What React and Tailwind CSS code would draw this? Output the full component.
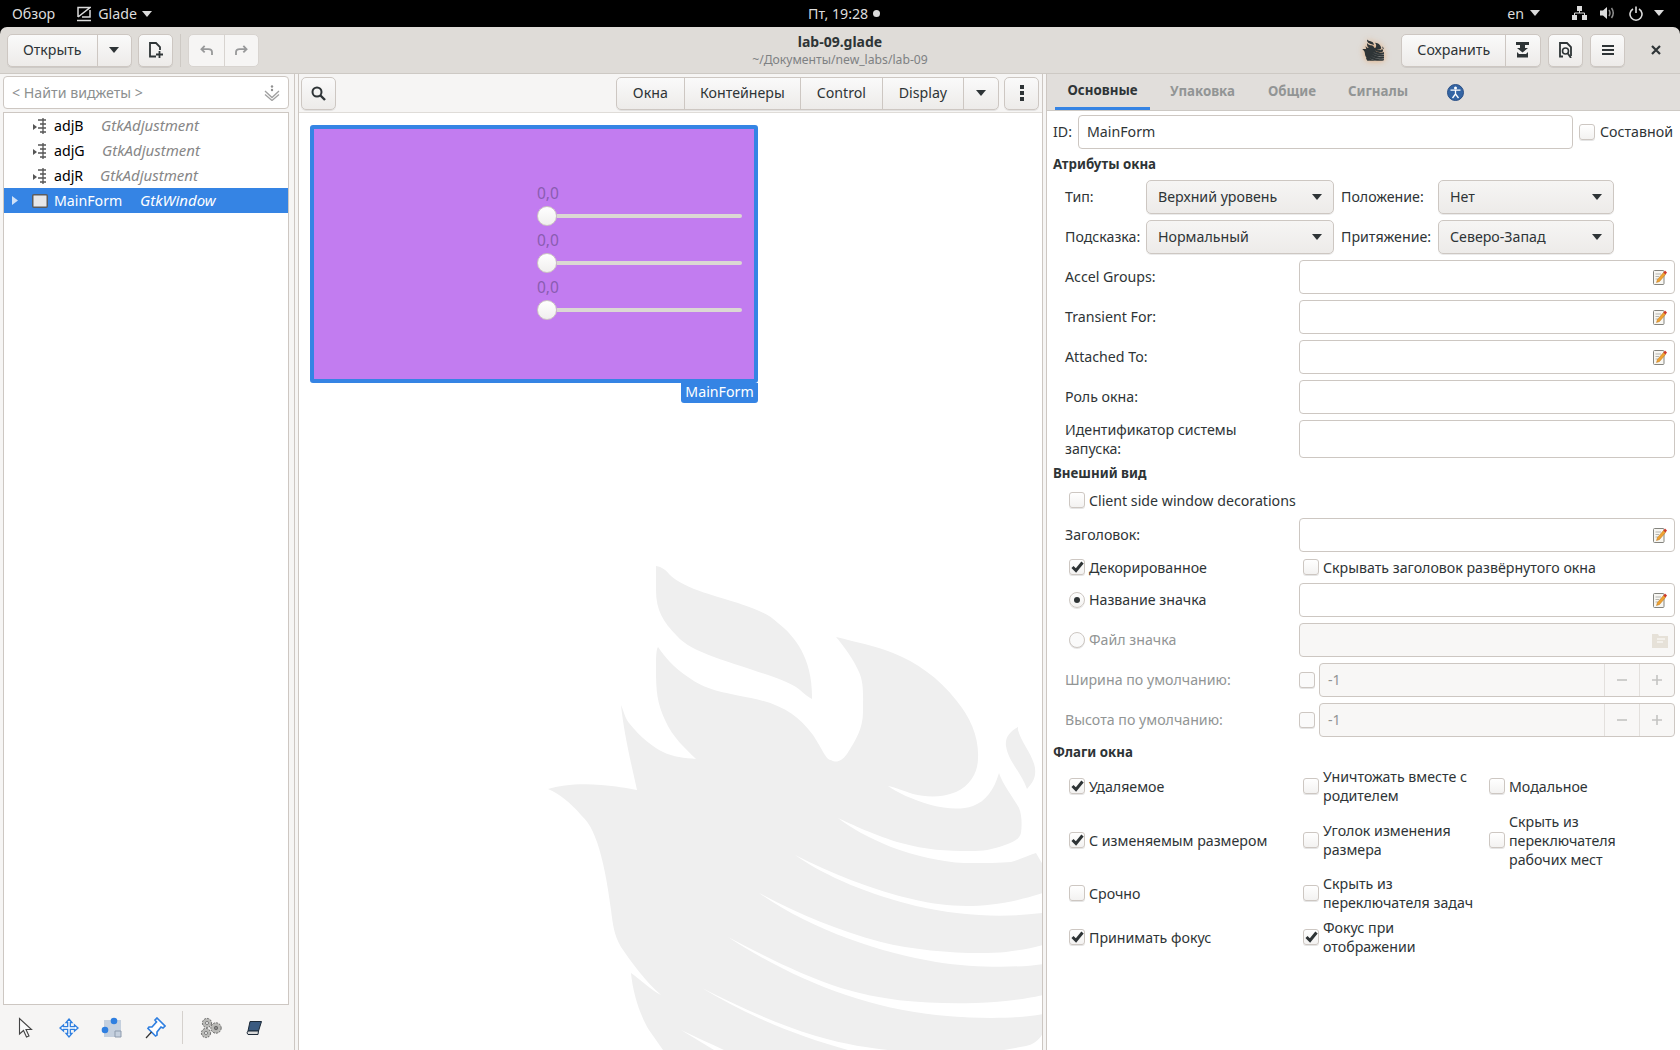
import React from 'react';

const btnCls = 'flex items-center justify-center h-[33px] border border-[#cdc7c2] rounded-[5px] bg-gradient-to-b from-[#fafafa] to-[#edebe9] shadow-[0_1px_0_rgba(0,0,0,0.08)]';

function FlameShape({ fill, cut }) {
  return (
    <>
      <path
        fill={fill}
        d="M655 566 C661 567 665 570 668 574 C680 586 700 592 737 603 C757 610 768 614 777 623 C795 637 812 660 811 699 C805 696 802 692 795 687 C780 678 750 670 713 657 C695 650 684 645 676 636 C662 622 655 610 655 590 Z"
      />
      <path
        fill={fill}
        d="M1017 727 C1008 732 1004 738 1005 746 C1007 761 1020 772 1026 789 C1032 782 1035 778 1034 768 C1032 755 1020 742 1017 730 Z"
      />
      <path
        fill={fill}
        d="M547 789 C560 785 580 783 600 785 C615 786 625 788 636 790 L632 772 C627 750 622 725 620 705 C623 712 624 718 628 723 C640 738 652 747 662 752 C672 757 684 758 695 759 C684 748 672 738 664 720 C656 703 655 690 655 670 C655 658 655 650 657 647 C664 657 672 667 687 677 C705 690 720 692 750 698 C780 704 797 715 812 735 C822 750 825 760 830 760 C835 763 840 762 846 754 C855 740 862 728 862 712 C862 695 863 683 858 672 C853 660 842 645 835 637 C855 642 875 646 892 653 C915 662 938 678 955 700 C970 718 978 738 977 758 C977 772 970 785 955 792 C940 798 925 797 912 794 C900 790 890 786 887 786 C895 792 912 800 930 805 C945 809 960 810 972 806 C985 801 993 790 998 773 C1002 785 1012 797 1018 808 C1021 815 1021 825 1020 833 C1018 840 1012 842 1004 845 C990 850 982 851 970 851 C945 851 925 850 900 843 C875 836 850 824 837 818 C850 828 868 838 890 847 C915 856 940 862 963 863 C985 863 1000 863 1010 862 C1018 860 1028 855 1035 853 L1042 865 L1042 1033 C1038 1040 1033 1044 1025 1046 L1003 1050 L662 1050 L648 1030 C640 1017 632 995 630 973 C640 980 650 990 660 995 C645 982 630 962 620 947 C613 935 612 925 610 910 C606 880 602 860 596 842 C590 825 585 820 580 815 C570 803 557 793 547 789 Z"
      />
      <path fill={cut} d="M794 855 C830 873 870 890 915 900 C950 908 990 910 1042 893 L1042 913 C1000 918 960 916 915 906 C870 895 825 877 794 855 Z" />
      <path fill={cut} d="M758 893 C800 915 835 930 880 942 C920 952 975 955 1005 952 C1020 950 1032 948 1042 945 L1042 964 C1015 968 975 968 935 962 C880 953 810 930 758 893 Z" />
      <path fill={cut} d="M727 937 C765 957 800 975 840 988 C885 1002 930 1004 975 1003 C1000 1002 1020 1000 1042 995 L1042 1014 C1015 1019 975 1019 935 1015 C860 1007 790 978 727 937 Z" />
      <path fill={cut} d="M701 988 C735 1005 770 1022 815 1036 C845 1045 870 1048 887 1050 L847 1050 C800 1037 750 1018 701 988 Z" />
      <path fill={cut} d="M680 1030 C695 1037 710 1044 723 1050 L713 1050 Z" />
    </>
  );
}

function Caret({ className = 'text-[#2e3436]' }) {
  return (
    <svg width="10" height="6" viewBox="0 0 10 6" className={className}>
      <path d="M0 0 H10 L5 6 Z" fill="currentColor" />
    </svg>
  );
}

function Check({ checked, disabled }) {
  return (
    <span className={`w-4 h-4 shrink-0 flex items-center justify-center rounded-[3px] border border-[#cdc7c2] shadow-[0_1px_0_rgba(0,0,0,0.1)] ${disabled ? 'bg-[#fafafa]' : 'bg-gradient-to-b from-white to-[#f3f2f1]'}`}>
      {checked && (
        <svg width="13" height="12" viewBox="0 0 13 12">
          <path d="M1.5 6 L5 9.5 L11.5 1.5" fill="none" stroke="#2e3436" strokeWidth="3" />
        </svg>
      )}
    </span>
  );
}

function Radio({ checked, disabled }) {
  return (
    <span className={`w-4 h-4 shrink-0 flex items-center justify-center rounded-full border border-[#cdc7c2] shadow-[0_1px_0_rgba(0,0,0,0.1)] ${disabled ? 'bg-[#fafafa]' : 'bg-gradient-to-b from-white to-[#f3f2f1]'}`}>
      {checked && <span className="w-[6px] h-[6px] rounded-full bg-[#2e3436]" />}
    </span>
  );
}

function Combo({ label, width }) {
  return (
    <div className={`${width} h-[34px] shrink-0 flex items-center justify-between pl-[11px] pr-[11px] border border-[#cdc7c2] rounded-[5px] bg-gradient-to-b from-[#f6f5f4] to-[#edebe9] shadow-[0_1px_0_rgba(0,0,0,0.08)]`}>
      <span>{label}</span>
      <Caret />
    </div>
  );
}

function Pencil() {
  return (
    <svg width="14" height="16" viewBox="0 0 14 16">
      <rect x="0.5" y="1.5" width="10.5" height="14" rx="1" fill="#f7f6f2" stroke="#84847f" />
      <path d="M2.5 5 H8 M2.5 7.5 H6 M2.5 10 H5" stroke="#b5b5b0" />
      <path d="M3.5 13.5 L4.5 10.5 L10.5 3.5 L12.5 5.5 L6.5 12.5 Z" fill="#eea232" stroke="#b8741a" strokeWidth="0.5" />
      <path d="M10.5 3.5 L12 1.5 L14 3.5 L12.5 5.5 Z" fill="#cf3a2b" />
    </svg>
  );
}

function PropEntry({ icon, disabled }) {
  return (
    <div className={`flex-1 h-[34px] border border-[#cdc7c2] rounded-[4px] flex items-center justify-end pr-[7px] ${disabled ? 'bg-[#f8f7f6]' : 'bg-white'}`}>
      {icon === 'pencil' && <Pencil />}
      {icon === 'folder' && (
        <svg width="16" height="15" viewBox="0 0 16 15" className="mr-[-1px]">
          <path d="M0 1 H6 L7 3 H16 V15 H0 Z" fill="#e6e1d8" />
          <path d="M5 6 H13 M5 9 H11" stroke="#f7f5f1" strokeWidth="1.4" />
        </svg>
      )}
    </div>
  );
}

function LabelRow({ label, icon }) {
  return (
    <div className="mt-[6px] h-[34px] flex items-center">
      <span className="w-[246px] pl-[12px] shrink-0">{label}</span>
      <PropEntry icon={icon} />
    </div>
  );
}

function SpinRow({ label }) {
  return (
    <div className="mt-[6px] h-[34px] flex items-center text-[#929595]">
      <span className="w-[246px] pl-[12px] shrink-0">{label}</span>
      <Check disabled />
      <div className="ml-[4px] flex-1 h-[34px] flex items-center border border-[#cdc7c2] rounded-[4px] bg-[#f8f7f6]">
        <span className="flex-1 pl-[8px]">-1</span>
        <span className="w-[35px] h-full flex items-center justify-center border-l border-[#e3e0dd]">
          <svg width="10" height="10" viewBox="0 0 10 10"><path d="M0 5 H10" stroke="#c4c4c2" strokeWidth="1.6" /></svg>
        </span>
        <span className="w-[35px] h-full flex items-center justify-center border-l border-[#e3e0dd]">
          <svg width="10" height="10" viewBox="0 0 10 10"><path d="M0 5 H10 M5 0 V10" stroke="#c4c4c2" strokeWidth="1.6" /></svg>
        </span>
      </div>
    </div>
  );
}

function Flag({ checked, children }) {
  return (
    <div className="flex items-center gap-[4px] leading-[19px]">
      <Check checked={checked} />
      <span>{children}</span>
    </div>
  );
}

function TreeRow({ name, type, typeClass }) {
  return (
    <div className="h-[25px] flex items-center relative pl-[29px]">
      <svg width="4" height="6" viewBox="0 0 4 6" className="mr-[1px] mt-[2px]"><path d="M0 0 L4 3 L0 6 Z" fill="#555" /></svg>
      <svg width="9" height="16" viewBox="0 0 9 16" className="mr-[7px] shrink-0">
        <path d="M5 0 V16 M0 2 H8 M2 6 H8 M0 10 H8 M2 14 H8" stroke="#555" strokeWidth="1.3" fill="none" />
      </svg>
      <span className="text-black">{name}</span>
      <span className={`${typeClass} italic text-[15px] text-[#878787] absolute`}>{type}</span>
    </div>
  );
}

function Slider() {
  return (
    <div className="h-[47px] flex flex-col">
      <span className="h-[19px] leading-[19px] text-[15.5px] text-[#8a5cb0] mt-[1px]">0,0</span>
      <div className="flex items-center mt-[3px]">
        <span className="w-[20px] h-[20px] rounded-full bg-gradient-to-b from-white to-[#f0efee] border border-[#cdc7c2] shrink-0 z-10" />
        <span className="w-[185px] h-[4px] bg-[#dbd8d3] rounded-r-[2px]" />
      </div>
    </div>
  );
}

function ToolIcon({ children }) {
  return <span className="w-[43px] h-full flex items-center justify-center">{children}</span>;
}

export default function App() {
  return (
    <div className="w-[1680px] h-[1050px] flex flex-col overflow-hidden bg-black font-['Noto_Sans',sans-serif] text-[14.2px] text-[#2e3436]">
      {/* Top bar */}
      <div className="h-[27px] shrink-0 relative flex items-center text-[#dcdcdc] pl-[12px] pr-[16px]">
        <span>Обзор</span>
        <svg width="14" height="16" viewBox="0 0 14 16" className="ml-[22px]">
          <path d="M1 11 V1.5 H13 L1 11 M13 4 V11 H5 M0 14.5 H14" fill="none" stroke="#dcdcdc" strokeWidth="1.5" />
        </svg>
        <span className="ml-[7px]">Glade</span>
        <span className="ml-[5px]"><Caret className="text-[#dcdcdc]" /></span>
        <div className="absolute left-[808px] top-0 h-full flex items-center gap-[5px]">
          <span>Пт, 19:28</span>
          <span className="w-[7px] h-[7px] rounded-full bg-[#dcdcdc]" />
        </div>
        <div className="ml-auto flex items-center">
          <span>en</span>
          <span className="ml-[6px]"><Caret className="text-[#dcdcdc]" /></span>
          <svg width="15" height="14" viewBox="0 0 15 14" className="ml-[32px]">
            <path d="M5 0 H10 V5 H5 Z M0 9 H5 V14 H0 Z M10 9 H15 V14 H10 Z" fill="#dcdcdc" />
            <path d="M7.5 5 V7 M2.5 9 V7 H12.5 V9" stroke="#dcdcdc" fill="none" />
          </svg>
          <svg width="15" height="14" viewBox="0 0 15 14" className="ml-[13px]">
            <path d="M0 4.5 H3 L7 1 V13 L3 9.5 H0 Z" fill="#dcdcdc" />
            <path d="M9 4 Q11 7 9 10 M11.5 2 Q15 7 11.5 12" stroke="#8e8e8e" strokeWidth="1.5" fill="none" />
          </svg>
          <svg width="14" height="15" viewBox="0 0 14 15" className="ml-[14px]">
            <path d="M4 3 A6 6 0 1 0 10 3 M7 0.5 V7" stroke="#dcdcdc" strokeWidth="1.6" fill="none" />
          </svg>
          <span className="ml-[11px]"><Caret className="text-[#dcdcdc]" /></span>
        </div>
      </div>

      {/* Header bar */}
      <div className="h-[47px] shrink-0 relative flex items-center pl-[7px] pr-[19px] rounded-t-[7px] bg-[#dfdcd8] border-b border-[#cdc9c4]">
        <div className={`${btnCls} w-[125px]`}>
          <span className="w-[90px] text-center">Открыть</span>
          <span className="w-[35px] h-full flex items-center justify-center border-l border-[#cdc7c2]"><Caret /></span>
        </div>
        <div className={`${btnCls} w-[35px] ml-[6px]`}>
          <svg width="14" height="16" viewBox="0 0 14 16">
            <path d="M7 14.5 H1 V1 H7 L11 5 V8" fill="none" stroke="#2e3436" strokeWidth="1.8" />
            <path d="M7 12.5 H14 M10.5 9 V16" stroke="#2e3436" strokeWidth="1.8" />
          </svg>
        </div>
        <span className="w-px h-[33px] bg-[#cdc9c4] ml-[7px]" />
        <div className="ml-[7px] flex h-[33px] w-[71px] border border-[#d8d4d0] rounded-[5px] bg-[#f6f5f4]">
          <span className="w-[35px] flex items-center justify-center">
            <svg width="13" height="11" viewBox="0 0 14 12"><path d="M5 1 L1.5 4.5 L5 8 M2 4.5 H9 Q13 4.5 13 8 V11" fill="none" stroke="#98999a" strokeWidth="2" /></svg>
          </span>
          <span className="flex-1 flex items-center justify-center border-l border-[#d8d4d0]">
            <svg width="13" height="11" viewBox="0 0 14 12"><path d="M9 1 L12.5 4.5 L9 8 M12 4.5 H5 Q1 4.5 1 8 V11" fill="none" stroke="#98999a" strokeWidth="2" /></svg>
          </span>
        </div>

        <div className="absolute left-0 right-0 top-0 h-full flex flex-col items-center pointer-events-none">
          <span className="font-bold text-[14px] leading-[18px] mt-[6px]">lab-09.glade</span>
          <span className="text-[12.2px] leading-[16px] mt-[1px] text-[#7e8183]">~/Документы/new_labs/lab-09</span>
        </div>

        <div className="ml-auto flex items-center z-10">
          <svg width="22" height="24" viewBox="540 560 502 490" className="mr-[17px] drop-shadow-[0_0_3px_rgba(230,150,80,0.7)]">
            <FlameShape fill="#2e3436" cut="#8f8f8c" />
          </svg>
          <div className={`${btnCls} w-[140px]`}>
            <span className="w-[105px] text-center">Сохранить</span>
            <span className="w-[35px] h-full flex items-center justify-center border-l border-[#cdc7c2]">
              <svg width="14" height="16" viewBox="0 0 14 16">
                <path d="M0 0 H13 V3 H0 Z M4 3 H9 V6 H12 L6.5 10.5 L1 6 H4 Z M1 10 L3 12 H10 L12 10 V15.5 H1 Z" fill="#2e3436" />
              </svg>
            </span>
          </div>
          <div className={`${btnCls} w-[35px] ml-[7px]`}>
            <svg width="14" height="16" viewBox="0 0 14 16">
              <path d="M4 14.5 H1 V1 H8 L12 5 V14" fill="none" stroke="#2e3436" strokeWidth="1.8" />
              <circle cx="6.5" cy="9" r="3" fill="none" stroke="#2e3436" strokeWidth="1.6" />
              <path d="M8.5 11 L12 16" stroke="#2e3436" strokeWidth="1.8" />
            </svg>
          </div>
          <div className={`${btnCls} w-[35px] ml-[7px]`}>
            <svg width="12" height="10" viewBox="0 0 12 10"><path d="M0 1 H12 M0 5 H12 M0 9 H12" stroke="#2e3436" strokeWidth="1.8" /></svg>
          </div>
          <svg width="10" height="10" viewBox="0 0 10 10" className="ml-[26px]"><path d="M1 1 L9 9 M9 1 L1 9" stroke="#2e3436" strokeWidth="2.2" /></svg>
        </div>
      </div>

      {/* Main area */}
      <div className="flex-1 min-h-0 flex bg-[#f6f5f4]">
        {/* Left panel */}
        <div className="w-[295px] shrink-0 flex flex-col pl-[3px] pr-[5px] pt-[2px] border-r border-[#cdc7c2]">
          <div className="h-[33px] shrink-0 border border-[#cdc7c2] rounded-[4px] bg-white flex items-center justify-between pl-[8px] pr-[8px] text-[#8c8f90]">
            <span>&lt; Найти виджеты &gt;</span>
            <svg width="16" height="16" viewBox="0 0 16 16">
              <circle cx="8" cy="1.5" r="1.2" fill="#909090" />
              <circle cx="8" cy="5" r="1.2" fill="#909090" />
              <path d="M1 6 L8 12.5 L15 6 M1 9.5 L8 15.5 L15 9.5" fill="none" stroke="#a0a0a0" strokeWidth="1.3" />
            </svg>
          </div>
          <div className="flex-1 mt-[3px] border border-[#cdc7c2] bg-white">
            <TreeRow name="adjB" type="GtkAdjustment" typeClass="left-[97px]" />
            <TreeRow name="adjG" type="GtkAdjustment" typeClass="left-[98px]" />
            <TreeRow name="adjR" type="GtkAdjustment" typeClass="left-[96px]" />
            <div className="h-[25px] flex items-center relative bg-[#3584e4] text-white pl-[8px]">
              <svg width="6" height="9" viewBox="0 0 6 9"><path d="M0 0 L6 4.5 L0 9 Z" fill="#cfe1f7" /></svg>
              <svg width="16" height="14" viewBox="0 0 16 14" className="ml-[14px]">
                <rect x="0.75" y="0.75" width="14.5" height="12.5" rx="1" fill="#e8e8e8" stroke="#5c5c5c" strokeWidth="1.5" />
              </svg>
              <span className="ml-[6px]">MainForm</span>
              <span className="italic text-[15px] absolute left-[136px]">GtkWindow</span>
            </div>
          </div>
          <div className="h-[45px] shrink-0 flex items-center pl-[1px]">
            <ToolIcon>
              <svg width="16" height="22" viewBox="0 0 16 22"><path d="M1.5 1.5 V17 L5.5 13.5 L8.5 20 L11 19 L8 12.5 L13.5 12.5 Z" fill="#fafafa" stroke="#444" strokeWidth="1.1" /></svg>
            </ToolIcon>
            <ToolIcon>
              <svg width="20" height="20" viewBox="0 0 20 20"><path d="M10 1 L13 4.5 H11.3 V8.7 H15.5 V7 L19 10 L15.5 13 V11.3 H11.3 V15.5 H13 L10 19 L7 15.5 H8.7 V11.3 H4.5 V13 L1 10 L4.5 7 V8.7 H8.7 V4.5 H7 Z" fill="#fff" stroke="#2f7fe0" strokeWidth="1.3" /></svg>
            </ToolIcon>
            <ToolIcon>
              <svg width="21" height="21" viewBox="0 0 21 21">
                <path d="M3 3 H20 V20 H3 Z" fill="#c5d0de" />
                <path d="M14 14 H20 V20 H14 Z" fill="none" stroke="#8d9bad" />
                <circle cx="13" cy="4" r="3.3" fill="#2f7fe0" />
                <circle cx="4" cy="13" r="3.3" fill="#2f7fe0" />
              </svg>
            </ToolIcon>
            <ToolIcon>
              <svg width="22" height="22" viewBox="0 0 22 22">
                <path d="M13 1 L21 9 L19 11 L17 10 L13 15 L13 18 L11.5 19 L4 11.5 L5 10 L8 10 L12.5 5 L11 3 Z" fill="#fff" stroke="#2f7fe0" strokeWidth="1.7" />
                <path d="M7.5 15 L2 21" stroke="#333" strokeWidth="1.2" />
              </svg>
            </ToolIcon>
            <span className="w-px h-[33px] bg-[#d5d1cd] mx-[6px]" />
            <ToolIcon>
              <svg width="22" height="22" viewBox="0 0 22 22">
                <g fill="#b9b9b6" stroke="#555" strokeWidth="0.8">
                  <circle cx="7" cy="6" r="4.6" strokeDasharray="2 1" />
                  <circle cx="16" cy="11" r="5.2" strokeDasharray="2 1" />
                  <circle cx="6" cy="16" r="4.6" strokeDasharray="2 1" />
                </g>
                <circle cx="7" cy="6" r="1.5" fill="#fff" stroke="#555" strokeWidth="0.7" />
                <circle cx="16" cy="11" r="1.7" fill="#888" stroke="#555" strokeWidth="0.7" />
                <circle cx="6" cy="16" r="1.5" fill="#fff" stroke="#555" strokeWidth="0.7" />
              </svg>
            </ToolIcon>
            <ToolIcon>
              <svg width="16" height="14" viewBox="0 0 16 14">
                <path d="M4 0.5 H15.5 L12.5 10 H2 Z" fill="#3a5a80" stroke="#1d2a38" />
                <path d="M2 10 Q0 12 2 13.5 H12 L12.5 10 Z" fill="#d9d9d9" stroke="#1d2a38" />
              </svg>
            </ToolIcon>
          </div>
        </div>

        {/* Center */}
        <div className="w-[3px] shrink-0" />
        <div className="w-[745px] shrink-0 flex flex-col border-l border-r border-[#cdc7c2] relative">
          <div className="h-[39px] shrink-0 flex items-center pl-[2px] pr-[3px] border-b border-[#dfdcd8]">
            <div className={`${btnCls} w-[35px]`}>
              <svg width="15" height="15" viewBox="0 0 15 15">
                <circle cx="6" cy="6" r="4.5" fill="none" stroke="#2e3436" strokeWidth="2" />
                <path d="M9.5 9.5 L14 14" stroke="#2e3436" strokeWidth="2.4" />
              </svg>
            </div>
            <div className={`${btnCls} ml-auto w-[383px]`}>
              <span className="w-[67px] text-center">Окна</span>
              <span className="w-[117px] h-full flex items-center justify-center border-l border-[#cdc7c2]">Контейнеры</span>
              <span className="w-[82px] h-full flex items-center justify-center border-l border-[#cdc7c2]">Control</span>
              <span className="w-[82px] h-full flex items-center justify-center border-l border-[#cdc7c2]">Display</span>
              <span className="w-[35px] h-full flex items-center justify-center border-l border-[#cdc7c2]"><Caret /></span>
            </div>
            <div className={`${btnCls} w-[35px] ml-[5px]`}>
              <svg width="4" height="16" viewBox="0 0 4 16"><path d="M0 0 H4 V4 H0 Z M0 6 H4 V10 H0 Z M0 12 H4 V16 H0 Z" fill="#2e3436" /></svg>
            </div>
          </div>
          <div className="flex-1 bg-white relative overflow-hidden">
            <svg width="744" height="937" viewBox="298 113 744 937" className="absolute left-0 top-0">
              <FlameShape fill="#efefef" cut="#ffffff" />
            </svg>
            <div className="relative ml-[11px] mt-[12px] w-[448px] flex flex-col items-end">
              <div className="w-full h-[258px] border-4 border-[#3584e4] rounded-[3px] bg-[#c27cf0] pl-[223px] pt-[54px]">
                <Slider />
                <Slider />
                <Slider />
              </div>
              <span className="h-[20px] w-[77px] bg-[#3584e4] text-white rounded-b-[3px] text-center leading-[18px]">MainForm</span>
            </div>
          </div>
        </div>
        <div className="w-[3px] shrink-0" />

        {/* Right panel */}
        <div className="flex-1 min-w-0 flex flex-col border-l border-[#cdc7c2] bg-white">
          <div className="h-[37px] shrink-0 flex bg-[#e1dedb] border-b border-[#cdc9c4] font-bold text-[13.3px] text-[#929595] pl-[8px]">
            <span className="h-full w-[95px] flex items-center justify-center text-[#2e3436] border-b-[3px] border-[#3584e4]">Основные</span>
            <span className="h-full flex items-center ml-[20px]">Упаковка</span>
            <span className="h-full flex items-center ml-[33px]">Общие</span>
            <span className="h-full flex items-center ml-[32px]">Сигналы</span>
            <span className="h-full flex items-center ml-[39px]">
              <svg width="17" height="17" viewBox="0 0 17 17">
                <circle cx="8.5" cy="8.5" r="8" fill="#3465a4" stroke="#2a4f85" />
                <circle cx="8.5" cy="4" r="1.5" fill="#fff" />
                <path d="M3.5 6.2 H13.5 M8.5 6.2 V10 M8.5 10 L5.5 14 M8.5 10 L11.5 14" stroke="#fff" strokeWidth="1.3" fill="none" />
              </svg>
            </span>
          </div>
          <div className="flex-1 flex flex-col pl-[6px] pr-[5px]">
            <div className="mt-[4px] h-[34px] flex items-center">
              <span className="w-[25px] shrink-0">ID:</span>
              <div className="w-[495px] h-[34px] shrink-0 border border-[#cdc7c2] rounded-[4px] bg-white flex items-center pl-[8px]">MainForm</div>
              <span className="ml-[6px] mr-[5px]"><Check /></span>
              <span>Составной</span>
            </div>
            <div className="mt-[5px] h-[20px] font-bold text-[13.3px] leading-[20px]">Атрибуты окна</div>
            <div className="mt-[6px] h-[34px] flex items-center">
              <span className="w-[93px] pl-[12px] shrink-0">Тип:</span>
              <Combo label="Верхний уровень" width="w-[188px]" />
              <span className="w-[104px] pl-[7px] shrink-0">Положение:</span>
              <Combo label="Нет" width="w-[176px]" />
            </div>
            <div className="mt-[6px] h-[34px] flex items-center">
              <span className="w-[93px] pl-[12px] shrink-0">Подсказка:</span>
              <Combo label="Нормальный" width="w-[188px]" />
              <span className="w-[104px] pl-[7px] shrink-0">Притяжение:</span>
              <Combo label="Северо-Запад" width="w-[176px]" />
            </div>
            <LabelRow label="Accel Groups:" icon="pencil" />
            <LabelRow label="Transient For:" icon="pencil" />
            <LabelRow label="Attached To:" icon="pencil" />
            <LabelRow label="Роль окна:" />
            <div className="mt-[6px] h-[38px] flex items-center">
              <span className="w-[246px] pl-[12px] pr-[30px] shrink-0 leading-[19px]">Идентификатор системы запуска:</span>
              <div className="flex-1 h-[38px] border border-[#cdc7c2] rounded-[4px] bg-white" />
            </div>
            <div className="mt-[5px] h-[20px] font-bold text-[13.3px] leading-[20px]">Внешний вид</div>
            <div className="mt-[7px] h-[20px] flex items-center pl-[16px]">
              <Flag>Client side window decorations</Flag>
            </div>
            <div className="mt-[8px] h-[34px] flex items-center">
              <span className="w-[246px] pl-[12px] shrink-0">Заголовок:</span>
              <PropEntry icon="pencil" />
            </div>
            <div className="mt-[5px] h-[20px] flex items-center pl-[16px]">
              <div className="w-[234px]"><Flag checked>Декорированное</Flag></div>
              <Flag>Скрывать заголовок развёрнутого окна</Flag>
            </div>
            <div className="mt-[6px] h-[34px] flex items-center">
              <div className="w-[246px] pl-[16px] shrink-0 flex items-center gap-[4px]"><Radio checked /><span>Название значка</span></div>
              <PropEntry icon="pencil" />
            </div>
            <div className="mt-[6px] h-[34px] flex items-center text-[#929595]">
              <div className="w-[246px] pl-[16px] shrink-0 flex items-center gap-[4px]"><Radio disabled /><span>Файл значка</span></div>
              <PropEntry icon="folder" disabled />
            </div>
            <SpinRow label="Ширина по умолчанию:" />
            <SpinRow label="Высота по умолчанию:" />
            <div className="mt-[5px] h-[20px] font-bold text-[13.3px] leading-[20px]">Флаги окна</div>
            <div className="mt-[5px] pl-[16px] grid grid-cols-[234px_186px_1fr] grid-rows-[38px_60px_36px_42px] gap-y-[5px]">
              <Flag checked>Удаляемое</Flag>
              <Flag>Уничтожать вместе с родителем</Flag>
              <Flag>Модальное</Flag>
              <Flag checked>С изменяемым размером</Flag>
              <Flag>Уголок изменения размера</Flag>
              <Flag>Скрыть из переключателя рабочих мест</Flag>
              <Flag>Срочно</Flag>
              <Flag>Скрыть из переключателя задач</Flag>
              <span />
              <Flag checked>Принимать фокус</Flag>
              <Flag checked>Фокус при отображении</Flag>
              <span />
            </div>
          </div>
        </div>
      </div>
    </div>
  );
}
